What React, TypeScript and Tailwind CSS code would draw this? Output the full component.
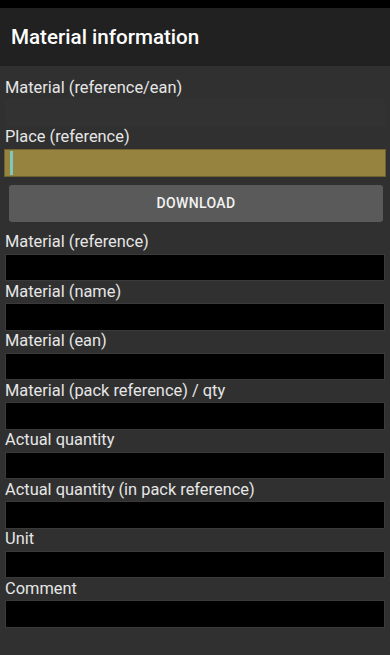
import React from "react";

const fields = [
  "Material (reference)",
  "Material (name)",
  "Material (ean)",
  "Material (pack reference) / qty",
  "Actual quantity",
  "Actual quantity (in pack reference)",
  "Unit",
  "Comment",
];

function Label({ children }: { children: React.ReactNode }) {
  return (
    <div className="flex h-[22px] items-center px-[5px] text-[16.4px] leading-none text-[#e6e6e6]">
      {children}
    </div>
  );
}

export default function App() {
  return (
    <div
      className="flex h-[655px] w-[390px] flex-col overflow-hidden bg-[#303030]"
      style={{ fontFamily: "Roboto, 'Noto Sans', sans-serif" }}
    >
      <div className="h-2 bg-black" />
      <header className="flex h-[58px] items-center bg-[#212121] pl-[11px]">
        <h1 className="text-[20.6px] font-medium text-white">Material information</h1>
      </header>

      <main className="flex flex-col pt-[11px]">
        <Label>Material (reference/ean)</Label>
        <div className="mx-[5px] h-[27.5px] bg-[#323232]" />

        <Label>Place (reference)</Label>
        <div className="mx-[4px] flex h-[28px] items-stretch border border-[#6e6330] bg-[#978340] py-[1px] pl-[5px]">
          <div className="w-[3px] bg-[#7fc8bd]" />
        </div>

        <button className="ml-[9px] mr-[7px] mt-[8px] h-[37px] rounded-[3px] bg-[#5a5a5a] text-[14px] font-medium tracking-wide text-[#f2f2f2]">
          DOWNLOAD
        </button>

        <div className="mt-[10px] flex flex-col">
          {fields.map((f) => (
            <div key={f} className="flex flex-col">
              <Label>{f}</Label>
              <div className="mx-[5px] h-[27.5px] border border-[#3a3a3a] bg-black" />
            </div>
          ))}
        </div>
      </main>
    </div>
  );
}
